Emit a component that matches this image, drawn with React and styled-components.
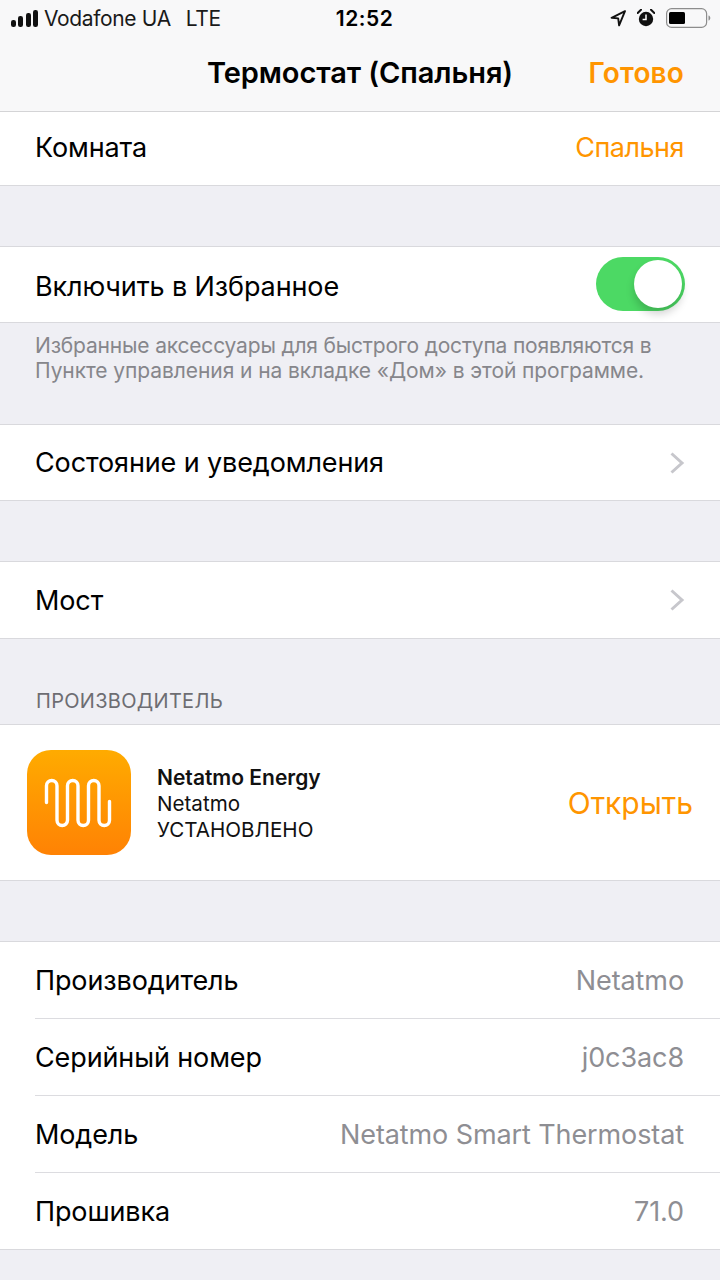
import React from 'react';
import styled, { createGlobalStyle } from 'styled-components';

const ORANGE = '#ff9500';

const GlobalStyle = createGlobalStyle`
  html, body { margin: 0; padding: 0; background: #efeff4; }
  body { font-family: Inter, "Liberation Sans", sans-serif; color: #000; }
  * { box-sizing: border-box; }
`;

const Page = styled.div`
  width: 720px;
  height: 1280px;
  overflow: hidden;
  background: #efeff4;
`;

const Header = styled.header`
  height: 112px;
  background: #f8f8f9;
  border-bottom: 1px solid #d4d4d6;
`;

const StatusBar = styled.div`
  height: 38px;
  padding: 0 9px 2px 11px;
  display: grid;
  grid-template-columns: 1fr auto 1fr;
  align-items: center;
  font-size: 21px;
  letter-spacing: -0.35px;
`;

const StatusLeft = styled.div`
  display: flex;
  align-items: center;
  gap: 6px;
  color: #1a1a1a;
`;

const Lte = styled.span`
  margin-left: 9px;
`;

const Clock = styled.div`
  margin-left: 7px;
  font-size: 21px;
  font-weight: 600;
  letter-spacing: 0.5px;
`;

const StatusRight = styled.div`
  display: flex;
  align-items: center;
  justify-content: flex-end;
  gap: 11px;
`;

const NavBar = styled.div`
  height: 73px;
  padding: 0 36px 4px;
  display: flex;
  align-items: center;
  justify-content: center;
  position: relative;
`;

const NavTitle = styled.div`
  font-size: 29px;
  font-weight: 600;
  letter-spacing: -0.08px;
`;

const NavAction = styled.div`
  position: absolute;
  right: 36px;
  font-size: 28px;
  font-weight: 600;
  letter-spacing: 0.15px;
  color: ${ORANGE};
`;

const Group = styled.section`
  background: #fff;
  border-bottom: 1px solid #d9d9dd;
  border-top: ${p => (p.$top ? '1px solid #d9d9dd' : 'none')};
  margin-top: ${p => p.$gap || 0}px;
`;

const Row = styled.div`
  height: ${p => p.$h || 76}px;
  padding: 0 36px ${p => p.$pb || 0}px 0;
  margin-left: 35px;
  display: flex;
  align-items: center;
  justify-content: space-between;
  font-size: 27px;
  letter-spacing: -0.12px;
  border-bottom: ${p => (p.$line ? '1px solid #dcdce0' : 'none')};
`;

const Label = styled.span`
  margin-top: ${p => p.$down || 0}px;
`;

const Value = styled.span`
  color: ${p => (p.$accent ? ORANGE : '#8e8e93')};
  letter-spacing: ${p => (p.$accent ? '-0.5px' : '-0.1px')};
`;

const Note = styled.div`
  height: 101px;
  padding: 10px 36px 0 35px;
  font-size: 21px;
  line-height: 25px;
  color: #86868b;
`;

const NoteLine = styled.div`
  letter-spacing: ${p => p.$spacing}px;
`;

const SectionLabel = styled.div`
  height: 85px;
  padding: 50px 36px 0;
  font-size: 20px;
  line-height: 24px;
  letter-spacing: 0.3px;
  color: #6d6d72;
`;

const AppRow = styled.div`
  height: 155px;
  padding: 0 27px;
  display: flex;
  align-items: center;
`;

const AppIcon = styled.div`
  width: 104px;
  height: 105px;
  padding-right: 2px;
  border-radius: 24px;
  background: linear-gradient(180deg, #ffab00, #ff8204);
  display: flex;
  align-items: center;
  justify-content: center;
`;

const AppInfo = styled.div`
  margin-left: 26px;
  padding-top: 2px;
  flex: 1;
  font-size: 20.6px;
  line-height: 26px;
  color: #111;
`;

const AppName = styled.div`
  font-size: 21px;
  font-weight: 600;
`;

const OpenLink = styled.div`
  font-size: 30px;
  color: ${ORANGE};
`;

const Switch = styled.div`
  width: 89px;
  height: 54px;
  margin: 0 -1px 2px 0;
  border-radius: 27px;
  background: #4cd964;
  position: relative;
`;

const Knob = styled.div`
  position: absolute;
  top: 3px;
  right: 3px;
  width: 48px;
  height: 48px;
  border-radius: 50%;
  background: #fff;
  box-shadow: 0 6px 8px rgba(0, 0, 0, 0.18);
`;

const ChevronWrap = styled.span`
  display: flex;
  margin-right: -1px;
`;

const Signal = () => (
  <svg width="27" height="17" viewBox="0 0 27 17">
    <rect x="0" y="10" width="5" height="7" rx="2.2" fill="#111" />
    <rect x="7" y="6" width="5" height="11" rx="2.2" fill="#111" />
    <rect x="15" y="3" width="5" height="14" rx="2.2" fill="#111" />
    <rect x="22" y="0" width="5" height="17" rx="2.2" fill="#111" />
  </svg>
);

const Location = () => (
  <svg width="16" height="17" viewBox="0 0 16 17">
    <path d="M15 1.2 1.6 7.8l6.6.6.9 7z" fill="none" stroke="#111" strokeWidth="1.9" strokeLinejoin="round" />
  </svg>
);

const Alarm = () => (
  <svg width="18" height="18" viewBox="0 0 18 18">
    <circle cx="9" cy="10" r="7.2" fill="#111" />
    <path d="M9 5.5V10.6H5.6" fill="none" stroke="#fff" strokeWidth="1.5" />
    <path d="M.7 4 4 .8M17.3 4 14 .8" stroke="#111" strokeWidth="2" strokeLinecap="round" />
  </svg>
);

const Battery = () => (
  <svg width="45" height="20" viewBox="0 0 45 20">
    <rect x="0.6" y="0.6" width="40" height="18.8" rx="5" fill="#f8f8f9" stroke="#8d8d8d" strokeWidth="1.2" />
    <rect x="3" y="4" width="16" height="12" rx="1.5" fill="#000" />
    <path d="M42.5 7.5c1.2.3 1.8 1.3 1.8 2.5s-.6 2.2-1.8 2.5z" fill="#8d8d8d" />
  </svg>
);

const Chevron = () => (
  <ChevronWrap>
    <svg width="16" height="24" viewBox="0 0 16 24">
      <path d="M2.5 2.5 13 12 2.5 21.5" fill="none" stroke="#c7c7cc" strokeWidth="3" />
    </svg>
  </ChevronWrap>
);

const Wave = () => (
  <svg width="70" height="52" viewBox="0 0 70 52">
    <path
      d="M3.5 25.5V8.75a5.25 5.25 0 0 1 10.5 0v34.5a5.25 5.25 0 0 0 10.5 0V8.75a5.25 5.25 0 0 1 10.5 0v34.5a5.25 5.25 0 0 0 10.5 0V8.75a5.25 5.25 0 0 1 10.5 0v34.5a5.25 5.25 0 0 0 10.5 0V24.5"
      fill="none"
      stroke="#fff"
      strokeWidth="3.4"
      strokeLinecap="round"
    />
  </svg>
);

const App = () => (
  <Page>
    <GlobalStyle />
    <Header>
      <StatusBar>
        <StatusLeft>
          <Signal />
          <span>Vodafone UA</span>
          <Lte>LTE</Lte>
        </StatusLeft>
        <Clock>12:52</Clock>
        <StatusRight>
          <Location />
          <Alarm />
          <Battery />
        </StatusRight>
      </StatusBar>
      <NavBar>
        <NavTitle>Термостат (Спальня)</NavTitle>
        <NavAction>Готово</NavAction>
      </NavBar>
    </Header>

    <Group>
      <Row $h={73} $pb={2}>
        <span>Комната</span>
        <Value $accent>Спальня</Value>
      </Row>
    </Group>

    <Group $top $gap={60}>
      <Row $h={75}>
        <Label $down={4}>Включить в Избранное</Label>
        <Switch><Knob /></Switch>
      </Row>
    </Group>
    <Note>
      <NoteLine $spacing={-0.18}>Избранные аксессуары для быстрого доступа появляются в</NoteLine>
      <NoteLine $spacing={-0.08}>Пункте управления и на вкладке «Дом» в этой программе.</NoteLine>
    </Note>

    <Group $top>
      <Row $h={75}>
        <span>Состояние и уведомления</span>
        <Chevron />
      </Row>
    </Group>

    <Group $top $gap={60}>
      <Row $h={76}>
        <span>Мост</span>
        <Chevron />
      </Row>
    </Group>

    <SectionLabel>ПРОИЗВОДИТЕЛЬ</SectionLabel>
    <Group $top>
      <AppRow>
        <AppIcon><Wave /></AppIcon>
        <AppInfo>
          <AppName>Netatmo Energy</AppName>
          <div>Netatmo</div>
          <div>УСТАНОВЛЕНО</div>
        </AppInfo>
        <OpenLink>Открыть</OpenLink>
      </AppRow>
    </Group>

    <Group $top $gap={60}>
      <Row $h={77} $line>
        <span>Производитель</span>
        <Value>Netatmo</Value>
      </Row>
      <Row $h={77} $line>
        <span>Серийный номер</span>
        <Value>j0c3ac8</Value>
      </Row>
      <Row $h={77} $line>
        <span>Модель</span>
        <Value>Netatmo Smart Thermostat</Value>
      </Row>
      <Row $h={76}>
        <span>Прошивка</span>
        <Value>71.0</Value>
      </Row>
    </Group>
  </Page>
);

export default App;
